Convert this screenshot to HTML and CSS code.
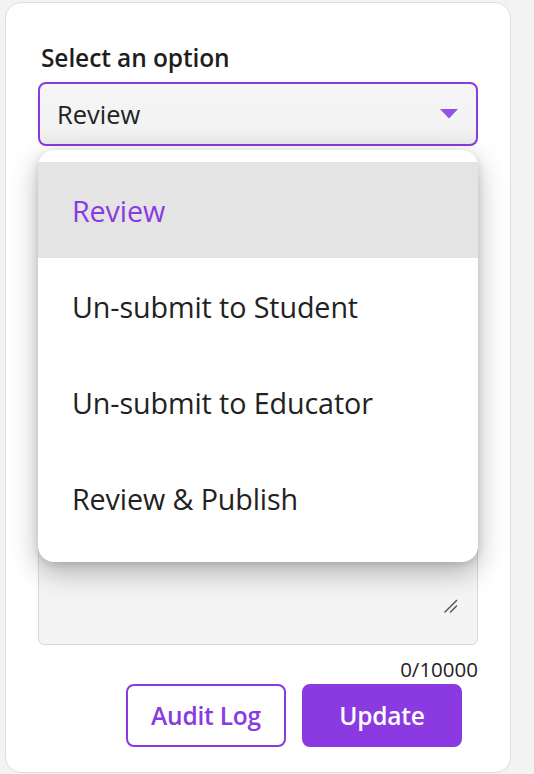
FILE: index.html
```html
<!DOCTYPE html>
<html lang="en">
<head>
<meta charset="utf-8">
<title>Select an option</title>
<link rel="stylesheet" href="styles.css">
</head>
<body>
<div class="card">
  <div class="field">
    <div class="label">Select an option</div>
    <div class="select-wrap">
      <div class="select">
        <span class="select-value">Review</span>
        <svg class="caret" width="20" height="10" viewBox="0 0 20 10"><polygon points="1,0 19,0 10,9.5" fill="#9352e6"/></svg>
      </div>
      <ul class="menu">
        <li class="item active">Review</li>
        <li class="item">Un-submit to Student</li>
        <li class="item">Un-submit to Educator</li>
        <li class="item">Review &amp; Publish</li>
      </ul>
    </div>
  </div>
  <div class="textbox">
    <svg class="resize" width="14" height="14" viewBox="0 0 14 14"><line x1="0.5" y1="13.5" x2="13" y2="1" stroke="#555" stroke-width="1.4"/><line x1="6" y1="13.5" x2="13" y2="6.5" stroke="#555" stroke-width="1.4"/></svg>
  </div>
  <div class="counter">0/10000</div>
  <div class="actions">
    <button class="btn btn-outline">Audit Log</button>
    <button class="btn btn-solid">Update</button>
  </div>
</div>
</body>
</html>
```
FILE: styles.css
```css
* { box-sizing: border-box; }
html, body { margin: 0; padding: 0; }
body {
  background: #f3f3f3;
  font-family: "Open Sans", "Lato", sans-serif;
  color: #222;
  height: 774px;
  overflow: hidden;
}
.card {
  margin: 2px 0 0 5px;
  width: 506px;
  height: 771px;
  background: #fff;
  border: 1px solid #dedede;
  border-radius: 16px;
  padding: 39px 32px 0 32px;
}
.label {
  font-size: 24.5px;
  font-weight: 600;
  line-height: 32px;
  color: #1e1e1e;
  padding-left: 3px;
  margin-bottom: 8px;
  letter-spacing: -0.1px;
}
.select-wrap { position: relative; }
.select {
  height: 64px;
  border: 2px solid #8a3ae0;
  border-radius: 8px;
  background: linear-gradient(#f5f5f5, #f3f3f3 70%, #ececec);
  display: flex;
  align-items: center;
  justify-content: space-between;
  padding: 0 17px 0 17px;
}
.select-value { font-size: 25.5px; color: #222; }
.caret { display: block; }
.menu {
  position: absolute;
  top: calc(100% + 4px);
  left: 0;
  right: 0;
  margin: 0;
  padding: 12px 0 16px;
  list-style: none;
  background: #fff;
  border-radius: 16px;
  box-shadow: 0 10px 28px rgba(0,0,0,0.28), 0 2px 8px rgba(0,0,0,0.12);
  z-index: 2;
}
.item {
  height: 96px;
  display: flex;
  align-items: center;
  padding-left: 34px;
  font-size: 28.7px;
  color: #222;
  letter-spacing: -0.1px;
}
.item.active { background: #e4e4e4; color: #8a3ae0; }
.textbox {
  margin-top: 24px;
  height: 475px;
  background: #f4f4f4;
  border: 1px solid #d9d9d9;
  border-radius: 6px;
  display: flex;
  align-items: flex-end;
  justify-content: flex-end;
  padding: 0 19px 31px 0;
}
.resize { display: block; }
.counter {
  margin-top: 10px;
  text-align: right;
  font-size: 20.5px;
  line-height: 28px;
  color: #222;
}
.actions {
  margin-top: 1px;
  display: flex;
  justify-content: flex-end;
  gap: 16px;
  padding-right: 16px;
}
.btn {
  width: 160px;
  height: 63px;
  border-radius: 8px;
  font-family: inherit;
  font-size: 24.5px;
  font-weight: 600;
  letter-spacing: -0.2px;
  cursor: pointer;
}
.btn-outline { background: #fff; border: 2px solid #8a3ae0; color: #8a3ae0; }
.btn-solid { background: #8a3ae0; border: 2px solid #8a3ae0; color: #fff; }
```
